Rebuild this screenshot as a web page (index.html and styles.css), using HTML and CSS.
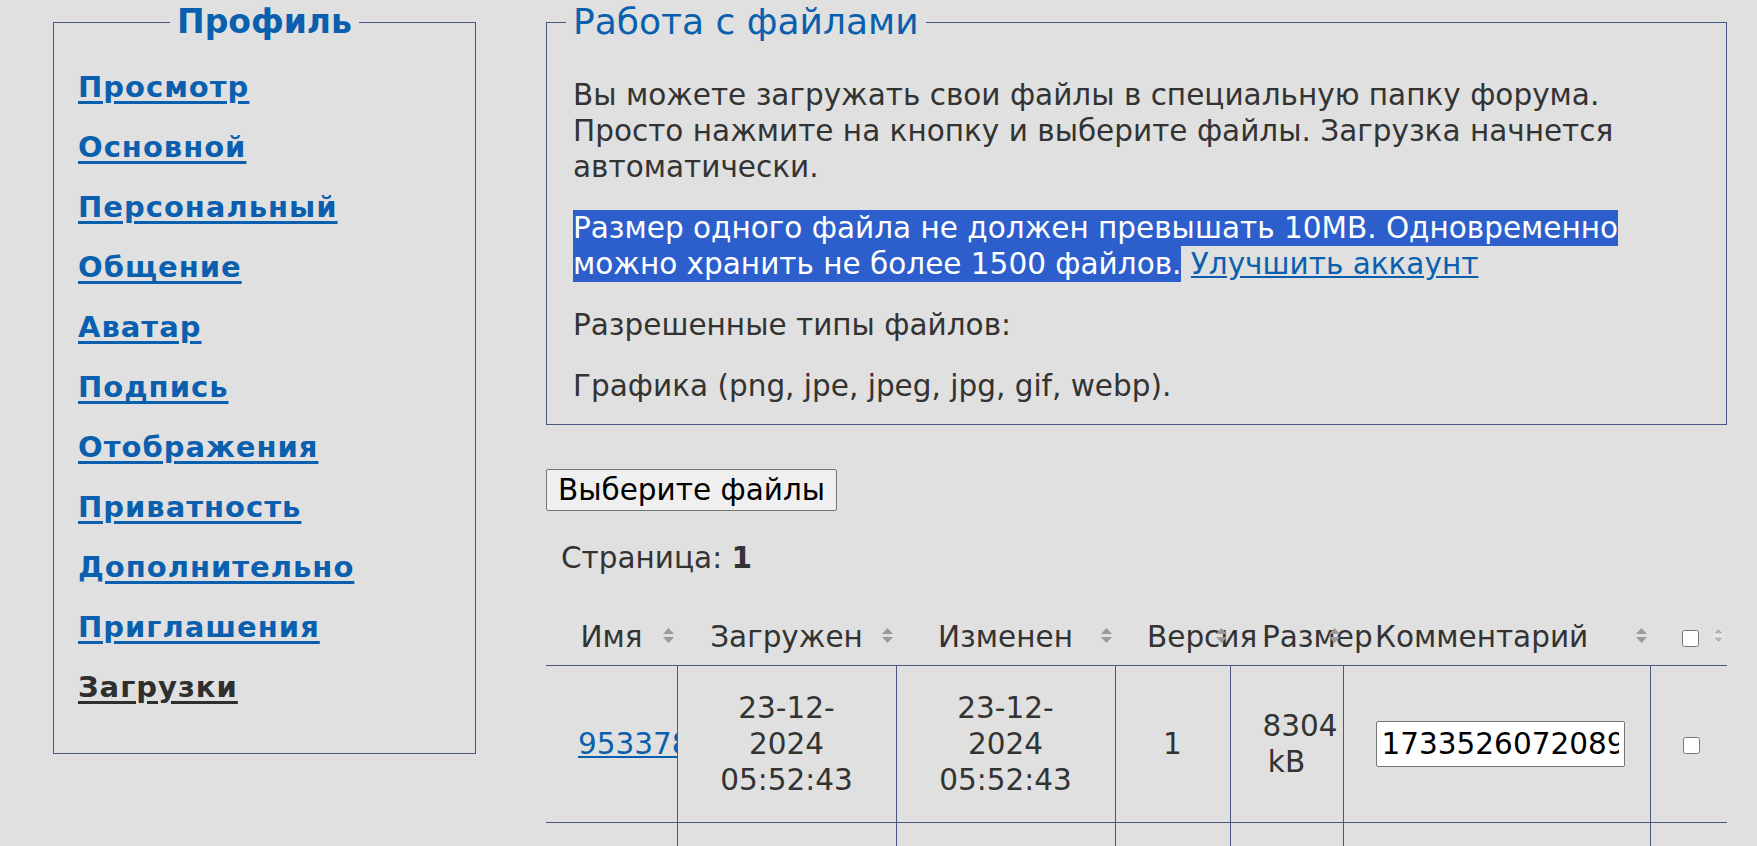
FILE: index.html
```html
<!DOCTYPE html>
<html lang="ru">
<head>
    <meta charset="UTF-8">
    <meta name="viewport" content="width=device-width, initial-scale=1.0">
    <title>Загрузки</title>
    <link rel="stylesheet" href="styles.css">
</head>

<body>
    <div class="page">
        <aside class="side">
            <fieldset class="box profile">
                <legend>Профиль</legend>
                <ul class="menu">
                    <li><a href="#">Просмотр</a></li>
                    <li><a href="#">Основной</a></li>
                    <li><a href="#">Персональный</a></li>
                    <li><a href="#">Общение</a></li>
                    <li><a href="#">Аватар</a></li>
                    <li><a href="#">Подпись</a></li>
                    <li><a href="#">Отображения</a></li>
                    <li><a href="#">Приватность</a></li>
                    <li><a href="#">Дополнительно</a></li>
                    <li><a href="#">Приглашения</a></li>
                    <li><a href="#" class="current">Загрузки</a></li>
                </ul>
            </fieldset>
        </aside>

        <main class="content">
            <fieldset class="box files">
                <legend>Работа с файлами</legend>
                <p>Вы можете загружать свои файлы в специальную папку форума. Просто нажмите на кнопку и выберите файлы. Загрузка начнется автоматически.</p>
                <p><span class="marked">Размер одного файла не должен превышать 10MB. Одновременно можно хранить не более 1500 файлов.</span> <a href="#">Улучшить аккаунт</a></p>
                <p>Разрешенные типы файлов:</p>
                <p>Графика (png, jpe, jpeg, jpg, gif, webp).</p>
            </fieldset>

            <button type="button" class="pick">Выберите файлы</button>

            <div class="pager">Страница: <b>1</b></div>

            <table class="uploads">
                <colgroup>
                    <col class="c-name">
                    <col class="c-date">
                    <col class="c-date">
                    <col class="c-ver">
                    <col class="c-size">
                    <col class="c-note">
                    <col class="c-check">
                </colgroup>
                <thead>
                    <tr>
                        <th>Имя <svg class="sort" viewBox="0 0 11 15"><path d="M0 6 5.5 0 11 6z M0 9h11l-5.5 6z"/></svg></th>
                        <th>Загружен <svg class="sort" viewBox="0 0 11 15"><path d="M0 6 5.5 0 11 6z M0 9h11l-5.5 6z"/></svg></th>
                        <th>Изменен <svg class="sort" viewBox="0 0 11 15"><path d="M0 6 5.5 0 11 6z M0 9h11l-5.5 6z"/></svg></th>
                        <th>Версия <svg class="sort" viewBox="0 0 11 15"><path d="M0 6 5.5 0 11 6z M0 9h11l-5.5 6z"/></svg></th>
                        <th>Размер <svg class="sort" viewBox="0 0 11 15"><path d="M0 6 5.5 0 11 6z M0 9h11l-5.5 6z"/></svg></th>
                        <th class="left">Комментарий <svg class="sort" viewBox="0 0 11 15"><path d="M0 6 5.5 0 11 6z M0 9h11l-5.5 6z"/></svg></th>
                        <th class="left"><input type="checkbox" class="tick"> <svg class="sort faint" viewBox="0 0 11 15"><path d="M0 6 5.5 0 11 6z M0 9h11l-5.5 6z"/></svg></th>
                    </tr>
                </thead>
                <tbody>
                    <tr>
                        <td class="name"><a href="#">953378e1a2c4f5b7.jpg</a></td>
                        <td>23-12-2024 05:52:43</td>
                        <td>23-12-2024 05:52:43</td>
                        <td>1</td>
                        <td>8304 kB</td>
                        <td><input type="text" class="note" value="1733526072089.jpg"></td>
                        <td><input type="checkbox" class="tick"></td>
                    </tr>
                    <tr>
                        <td class="name"><a href="#">8a41c07d93e2b6f1.png</a></td>
                        <td>23-12-2024 05:50:11</td>
                        <td>23-12-2024 05:50:11</td>
                        <td>1</td>
                        <td>512 kB</td>
                        <td><input type="text" class="note" value="1733525891774.png"></td>
                        <td><input type="checkbox" class="tick"></td>
                    </tr>
                </tbody>
            </table>
        </main>
    </div>
</body>
</html>
```

FILE: styles.css
```css
html {
    overflow: hidden;
}

body {
    margin: 0;
    background-color: #dfe0df;
    color: #333;
    font-family: 'DejaVu Sans', sans-serif;
    font-size: 29.5px;
    line-height: 36px;
}

a {
    color: #0a5fae;
}

.page {
    display: flex;
    gap: 70px;
    padding: 0 30px 0 53px;
}

.side {
    flex: 0 0 423px;
}

.content {
    flex: 1;
    min-width: 0;
}

/* общие рамки */
.box {
    margin: 0;
    border: 1px solid #4b5782;
    min-width: 0;
}

.box legend {
    line-height: 44px;
    color: #0a5fae;
}

/* левое меню */
.profile {
    padding: 13px 24px 36px;
}

.profile legend {
    margin: 0 auto;
    padding: 0 7px;
    font-size: 33px;
    font-weight: 700;
}

.menu {
    list-style: none;
    margin: 0;
    padding: 0;
}

.menu li {
    line-height: 60px;
}

.menu a {
    font-size: 29px;
    font-weight: 700;
    letter-spacing: 1px;
    text-decoration-thickness: 3px;
    text-underline-offset: 4px;
}

.menu a.current {
    color: #2f2f2f;
}

/* блок с описанием */
.files {
    padding: 33px 26px 20px;
}

.files legend {
    margin-left: -7px;
    padding: 0 7px;
    font-size: 36px;
}

.files p {
    margin: 0 0 25px;
}

.files p:last-child {
    margin-bottom: 0;
}

.marked {
    background: #2d5fcc;
    color: #fff;
    padding: 1px 0;
}

.pick {
    display: block;
    margin-top: 44px;
    padding: 3px 11px;
    font-family: 'DejaVu Sans', sans-serif;
    font-size: 29.5px;
    color: #000;
    background: #efefef;
    border: 1px solid #767676;
    border-radius: 2px;
}

.pager {
    margin: 29px 0 31px 15px;
}

/* таблица файлов */
.uploads {
    width: 100%;
    table-layout: fixed;
    border-collapse: collapse;
}

.c-name { width: 131px; }
.c-date { width: 219px; }
.c-ver { width: 115px; }
.c-size { width: 113px; }
.c-note { width: 307px; }
.c-check { width: 77px; }

.uploads th {
    position: relative;
    padding: 12px 32px 10px;
    font-weight: 400;
    text-align: center;
    white-space: nowrap;
    border-bottom: 1px solid #4b5782;
}

.uploads th.left {
    text-align: left;
}

.sort {
    position: absolute;
    right: 3px;
    top: 50%;
    width: 11px;
    height: 15px;
    margin-top: -8px;
    fill: #9a9a9a;
}

.sort.faint {
    fill: #b4b4b4;
    stroke: #f4f4f4;
    stroke-width: 1px;
}

.uploads td {
    padding: 24px 32px;
    text-align: center;
    vertical-align: middle;
    border-bottom: 1px solid #4b5782;
    border-left: 1px solid #4b5782;
}

.uploads td:first-child {
    border-left: 0;
}

.uploads td.name {
    overflow: hidden;
    white-space: nowrap;
}

.note {
    box-sizing: border-box;
    width: 249px;
    height: 46px;
    padding: 2px 5px;
    font-family: 'DejaVu Sans', sans-serif;
    font-size: 29.5px;
    color: #000;
    background: #fff;
    border: 1px solid #767676;
    border-radius: 2px;
}

.tick {
    width: 17px;
    height: 17px;
    margin: 0;
    vertical-align: middle;
}
```
